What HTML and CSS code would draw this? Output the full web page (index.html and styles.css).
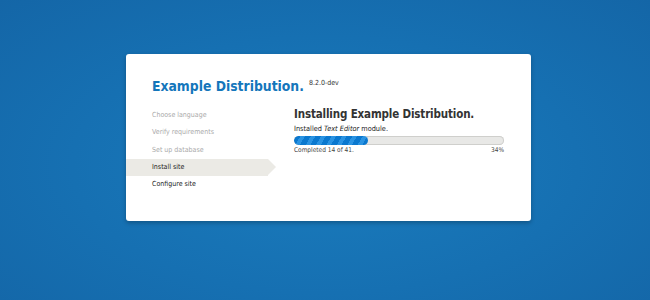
FILE: index.html
```html
<!DOCTYPE html>
<html lang="en">
<head>
  <meta charset="UTF-8" />
  <meta name="viewport" content="width=device-width, initial-scale=1.0" />
  <title>Installing Example Distribution</title>
  <link rel="stylesheet" href="styles.css">
</head>
<body>
  <div class="installer">
    <header class="site-title">
      <h1>Example Distribution.</h1>
      <span class="version">8.2.0-dev</span>
    </header>

    <div class="layout">
      <ol class="steps">
        <li class="done">Choose language</li>
        <li class="done">Verify requirements</li>
        <li class="done">Set up database</li>
        <li class="active">Install site</li>
        <li>Configure site</li>
      </ol>

      <section class="content">
        <h2>Installing Example Distribution.</h2>
        <p class="message">Installed <em>Text Editor</em> module.</p>
        <div class="progress">
          <div class="progress-fill" style="width: 35%"></div>
        </div>
        <div class="progress-info">
          <span>Completed 14 of 41.</span>
          <span>34%</span>
        </div>
      </section>
    </div>
  </div>
</body>
</html>
```

FILE: styles.css
```css
html, body {
  height: 100%;
}
body {
  margin: 0;
  font-family: "DejaVu Sans", "Liberation Sans", sans-serif;
  font-stretch: condensed;
  background: radial-gradient(ellipse at 50% 55%, #1a7cbd 0%, #1670b2 55%, #1466a7 100%);
  color: #222;
  overflow: hidden;
}
.installer {
  width: 405px;
  height: 167px;
  margin: 54px 0 0 126px;
  background: #fff;
  border-radius: 3px;
  box-shadow: 0 2px 4px rgba(0, 0, 0, 0.25);
  box-sizing: border-box;
  padding-top: 22px;
}
.site-title {
  display: flex;
  align-items: flex-start;
  padding-left: 26px;
  height: 30px;
}
.site-title h1 {
  margin: 0;
  font-size: 13.8px;
  line-height: 20px;
  font-weight: bold;
  color: #1476bb;
}
.version {
  font-size: 7px;
  color: #333;
  margin: 1px 0 0 5px;
  line-height: 12px;
}
.layout {
  display: flex;
  margin-top: 1px;
}
.steps {
  list-style: none;
  margin: 0;
  padding: 0;
  width: 142px;
  flex: none;
}
.steps li {
  position: relative;
  height: 17.3px;
  line-height: 17.3px;
  padding-left: 26px;
  font-size: 7px;
  color: #222;
}
.steps li.done {
  color: #aaa;
}
.steps li.active {
  background: #ebeae5;
}
.steps li.active::after {
  content: "";
  position: absolute;
  top: 0;
  right: -8px;
  border-top: 8.65px solid transparent;
  border-bottom: 8.65px solid transparent;
  border-left: 8px solid #ebeae5;
}
.content {
  flex: 1;
  padding: 0 27px 0 26px;
}
.content h2 {
  margin: -1px 0 0;
  font-size: 11.5px;
  line-height: 16px;
  font-weight: bold;
  color: #333;
  letter-spacing: -0.15px;
  white-space: nowrap;
}
.message {
  margin: 2px 0 0;
  font-size: 7.3px;
  line-height: 10px;
  color: #222;
}
.progress {
  margin-top: 2px;
  height: 9px;
  border-radius: 5px;
  background: #e8e8e6;
  box-shadow: inset 0 0 0 1px #cfcfcc;
  overflow: hidden;
}
.progress-fill {
  height: 100%;
  border-radius: 5px;
  background-color: #0a78cf;
  background-image: repeating-linear-gradient(-60deg, #0a78cf 0 5px, #2a93e2 5px 9px);
}
.progress-info {
  display: flex;
  justify-content: space-between;
  font-size: 6.5px;
  line-height: 11px;
  color: #444;
}
```
